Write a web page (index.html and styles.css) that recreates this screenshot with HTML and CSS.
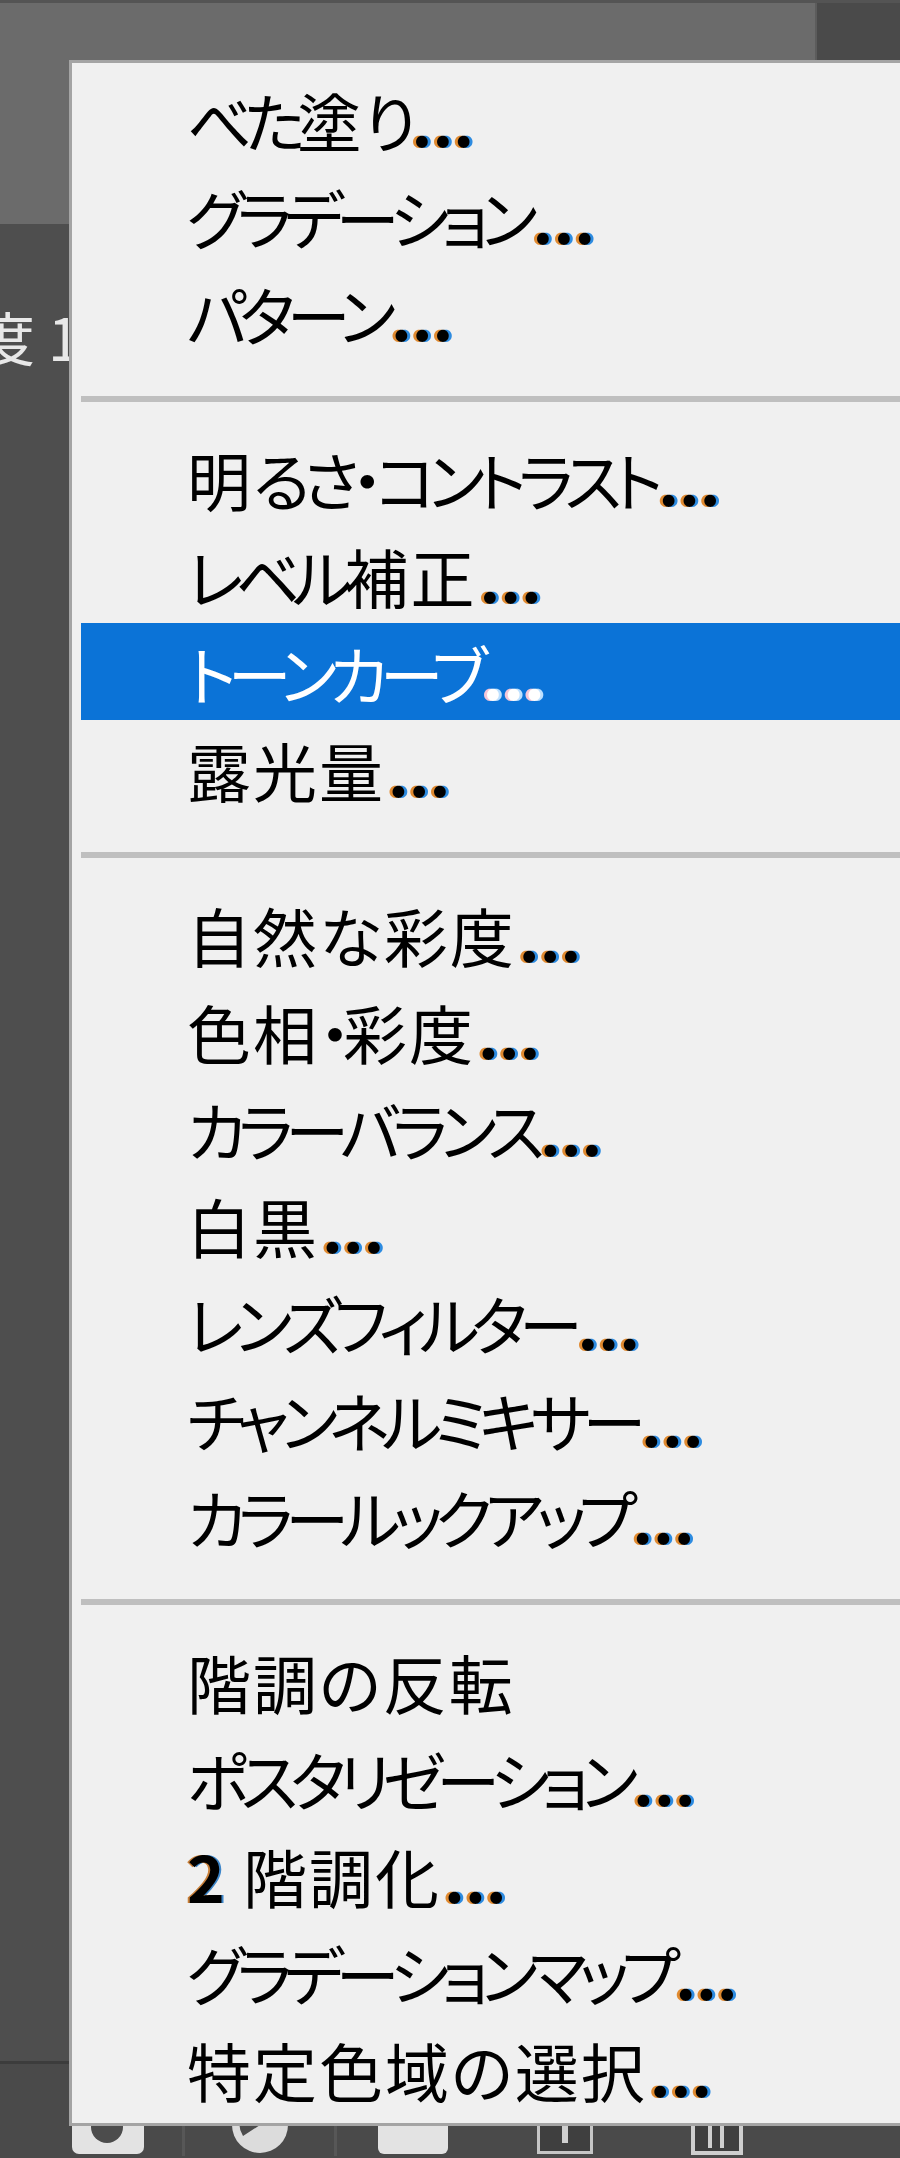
FILE: index.html
```html
<!DOCTYPE html>
<html lang="ja">
<head>
    <meta charset="UTF-8">
    <meta name="viewport" content="width=device-width, initial-scale=1.0">
    <title>色調補正メニュー</title>
    <link rel="stylesheet" href="styles.css">
</head>
<body>
    <div class="app">
        <div class="topbar">
            <div class="topbar-line"></div>
            <div class="topbar-row">
                <div class="tab-active"></div>
                <div class="tab-rest"></div>
            </div>
        </div>

        <div class="sidebar">
            <div class="side-label">度 1</div>
        </div>

        <div class="footer">
            <div class="tool divided">
                <svg width="72" height="60" viewBox="0 0 72 60">
                    <rect x="0" y="0" width="72" height="58" rx="7" fill="#e3e3e3"/>
                    <circle cx="35" cy="31" r="16" fill="#4c4c4c"/>
                </svg>
            </div>
            <div class="tool divided">
                <svg width="58" height="60" viewBox="0 0 58 60">
                    <circle cx="29" cy="29" r="28" fill="#dcdcdc"/>
                    <path d="M29 9 A20 20 0 0 0 12 40 L29 29 Z" fill="#4c4c4c"/>
                </svg>
            </div>
            <div class="tool">
                <svg width="70" height="60" viewBox="0 0 70 60">
                    <rect x="0" y="0" width="70" height="58" rx="6" fill="#e3e3e3"/>
                </svg>
            </div>
            <div class="tool">
                <svg width="56" height="60" viewBox="0 0 56 60">
                    <rect x="1.5" y="1.5" width="53" height="55" fill="#3f3f3f" stroke="#c6c6c6" stroke-width="3"/>
                    <rect x="25" y="12" width="6" height="35" fill="#cfcfcf"/>
                    <rect x="11" y="24" width="34" height="6" fill="#cfcfcf"/>
                </svg>
            </div>
            <div class="tool">
                <svg width="52" height="60" viewBox="0 0 52 60">
                    <rect x="2" y="0" width="48" height="57" fill="#3f3f3f" stroke="#cfcfcf" stroke-width="4"/>
                    <rect x="17" y="0" width="4" height="52" fill="#cfcfcf"/>
                    <rect x="29" y="0" width="4" height="52" fill="#cfcfcf"/>
                </svg>
            </div>
        </div>

        <div class="menu">
            <div class="item"><span class="kana">べた</span>塗<span class="kana">り</span><span class="dots">...</span></div>
            <div class="item"><span class="kana">グラデーション</span><span class="dots">...</span></div>
            <div class="item"><span class="kana">パターン</span><span class="dots">...</span></div>
            <div class="sep"></div>
            <div class="item">明<span class="kana">るさ・コントラスト</span><span class="dots">...</span></div>
            <div class="item"><span class="kana">レベル</span>補正<span class="dots">...</span></div>
            <div class="item active"><span class="kana">トーンカーブ</span><span class="dots">...</span></div>
            <div class="item">露光量<span class="dots">...</span></div>
            <div class="sep"></div>
            <div class="item">自然な彩度<span class="dots">...</span></div>
            <div class="item">色相<span class="kana">・</span>彩度<span class="dots">...</span></div>
            <div class="item"><span class="kana">カラーバランス</span><span class="dots">...</span></div>
            <div class="item">白黒<span class="dots">...</span></div>
            <div class="item"><span class="kana">レンズフィルター</span><span class="dots">...</span></div>
            <div class="item"><span class="kana">チャンネルミキサー</span><span class="dots">...</span></div>
            <div class="item"><span class="kana">カラールックアップ</span><span class="dots">...</span></div>
            <div class="sep"></div>
            <div class="item">階調の反転</div>
            <div class="item"><span class="kana">ポスタリゼーション</span><span class="dots">...</span></div>
            <div class="item"><span class="num">2</span>&nbsp;階調化<span class="dots">...</span></div>
            <div class="item"><span class="kana">グラデーションマップ</span><span class="dots">...</span></div>
            <div class="item">特定色域の選択<span class="dots">...</span></div>
        </div>
    </div>
</body>
</html>
```

FILE: styles.css
```css
* {
    margin: 0;
    padding: 0;
    box-sizing: border-box;
}

body {
    width: 900px;
    height: 2158px;
    overflow: hidden;
    background: #4e4e4e;
    font-family: "Noto Sans CJK JP", "Noto Sans", sans-serif;
}

.app {
    position: relative;
    height: 2158px;
    display: flex;
    flex-direction: column;
}

/* panel header behind the menu */
.topbar {
    height: 224px;
    display: flex;
    flex-direction: column;
}

.topbar-line {
    height: 3px;
    background: #545454;
}

.topbar-row {
    flex: 1;
    display: flex;
}

.tab-active {
    width: 817px;
    background: #6b6b6b;
    border-right: 2px solid #5c5c5c;
}

.tab-rest {
    flex: 1;
    background: #4a4a4a;
}

.sidebar {
    flex: 1;
    background: #4e4e4e;
    padding-top: 83px;
    overflow: hidden;
}

.side-label {
    color: #e8e8e8;
    font-size: 58px;
    line-height: 1;
    margin-left: -23px;
    white-space: nowrap;
}

/* layer panel buttons */
.footer {
    height: 97px;
    border-top: 3px solid #3c3c3c;
    background: #4a4a4a;
    display: flex;
    align-items: flex-end;
    padding: 0 0 2px 33px;
}

.tool {
    width: 152px;
    display: flex;
    justify-content: center;
}

.tool.divided {
    border-right: 3px solid #575757;
    align-self: stretch;
    align-items: flex-end;
}

.tool svg {
    display: block;
}

/* context menu */
.menu {
    position: absolute;
    left: 69px;
    top: 60px;
    width: 845px;
    background: #f0f0f0;
    border: 3px solid #a4a4a4;
    border-right: none;
    padding: 7px 0 6px 9px;
}

.item {
    height: 97px;
    display: flex;
    align-items: center;
    padding-left: 106px;
    font-size: 64px;
    letter-spacing: 2px;
    color: #000;
    white-space: nowrap;
    font-feature-settings: "palt";
}

.kana {
    letter-spacing: -8px;
}

.item.active {
    background: #0b73d7;
    color: #fff;
}

.dots {
    margin-left: 3px;
    font-weight: 700;
    letter-spacing: 0;
    text-shadow: -3px 0 #e08a30, 3px 0 #2d8be0;
}

.item.active .dots {
    text-shadow: -3px 0 #f5c6d8, 3px 0 #bde0ff;
}

.num {
    font-weight: 700;
    text-shadow: -2px 0 #c9803a, 2px 0 #3d86c9;
}

.sep {
    height: 6px;
    background: #bfbfbf;
    margin: 35px 0 27px;
}
```
